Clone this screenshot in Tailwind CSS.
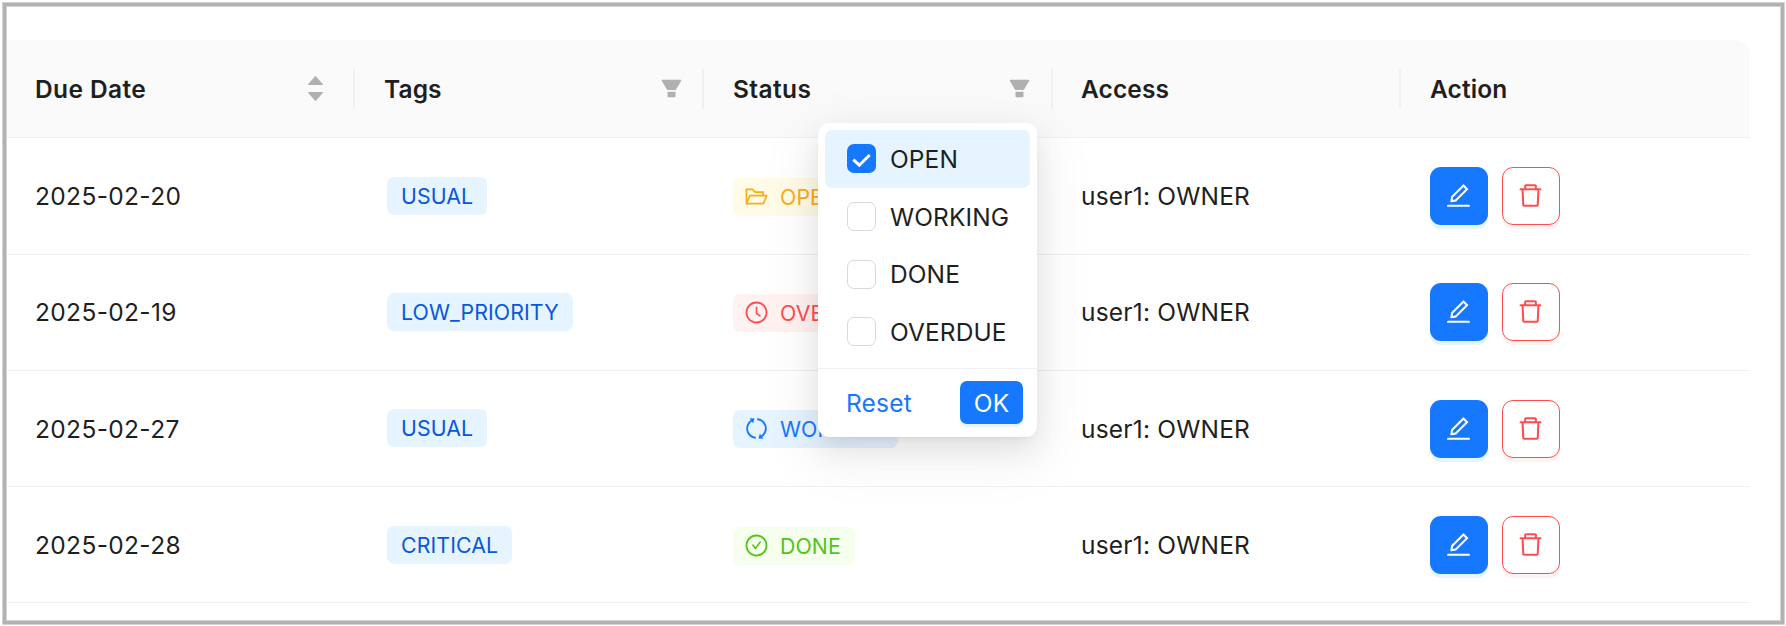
<!DOCTYPE html>
<html lang="en">
<head>
<meta charset="utf-8">
<title>Tasks</title>
<script src="https://cdn.jsdelivr.net/npm/@tailwindcss/browser@4"></script>
</head>
<body class="bg-white">
<svg class="hidden">
  <symbol id="filter" viewBox="0 0 1024 1024"><path d="M349 838c0 17.7 14.2 32 31.8 32h262.4c17.6 0 31.8-14.3 31.8-32V642H349v196zm531.1-684H143.9c-24.5 0-39.8 26.7-27.5 48l221.3 376h348.8l221.3-376c12.1-21.3-3.2-48-27.7-48z"/></symbol>
  <symbol id="edit" viewBox="0 0 1024 1024"><path d="M257.7 752c2 0 4-.2 6-.5L431.9 722c2-.4 3.9-1.3 5.3-2.8l423.9-423.9a9.96 9.96 0 000-14.1L694.9 114.9c-1.9-1.9-4.4-2.9-7.1-2.9s-5.2 1-7.1 2.9L256.8 538.8c-1.5 1.5-2.4 3.3-2.8 5.3l-29.5 168.2a33.5 33.5 0 009.4 29.8c6.6 6.4 14.9 9.9 23.8 9.9zm67.4-174.4L687.8 215l73.3 73.3-362.7 362.6-88.9 15.7 15.6-89zM880 836H144c-17.7 0-32 14.3-32 32v36c0 4.4 3.6 8 8 8h784c4.4 0 8-3.6 8-8v-36c0-17.7-14.3-32-32-32z"/></symbol>
  <symbol id="trash" viewBox="0 0 1024 1024"><path d="M360 184h-8c4.4 0 8-3.6 8-8v8h304v-8c0 4.4 3.6 8 8 8h-8v72h72v-80c0-35.3-28.7-64-64-64H352c-35.3 0-64 28.7-64 64v80h72v-72zm504 72H160c-17.7 0-32 14.3-32 32v32c0 4.4 3.6 8 8 8h60.4l24.7 523c1.6 34.1 29.8 61 63.9 61h454c34.2 0 62.3-26.8 63.9-61l24.7-523H888c4.4 0 8-3.6 8-8v-32c0-17.7-14.3-32-32-32zM731.3 840H292.7l-24.2-512h487l-24.2 512z"/></symbol>
  <symbol id="folder" viewBox="0 0 1024 1024"><path d="M928 444H820V330.4c0-17.7-14.3-32-32-32H473L355.7 186.2a8.15 8.15 0 00-5.5-2.2H96c-17.7 0-32 14.3-32 32v592c0 17.7 14.3 32 32 32h698c13 0 24.8-7.9 29.7-20l134-332c1.5-3.8 2.3-7.9 2.3-12 0-17.7-14.3-32-32-32zM136 256h188.5l119.6 114.4H748V444H238c-13 0-24.8 7.9-29.7 20L136 643.2V256zm635.3 512H159l103.3-256h612.4L771.3 768z"/></symbol>
  <symbol id="clock" viewBox="0 0 1024 1024"><path d="M512 64C264.6 64 64 264.6 64 512s200.6 448 448 448 448-200.6 448-448S759.4 64 512 64zm0 820c-205.4 0-372-166.6-372-372s166.6-372 372-372 372 166.6 372 372-166.6 372-372 372z"/><path d="M686.7 638.6L544.1 535.5V288c0-4.4-3.6-8-8-8H488c-4.4 0-8 3.6-8 8v275.4c0 2.6 1.2 5 3.3 6.5l165.4 120.6c3.6 2.6 8.6 1.8 11.2-1.7l28.6-39c2.6-3.7 1.8-8.7-1.8-11.2z"/></symbol>
  <symbol id="done" viewBox="0 0 1024 1024"><path d="M699 353h-46.9c-10.2 0-19.9 4.9-25.9 13.3L469 584.3l-71.2-98.8c-6-8.3-15.6-13.3-25.9-13.3H325c-6.5 0-10.3 7.4-6.5 12.7l124.6 172.8a31.8 31.8 0 0051.7 0l210.6-292c3.9-5.3.1-12.7-6.4-12.7z"/><path d="M512 64C264.6 64 64 264.6 64 512s200.6 448 448 448 448-200.6 448-448S759.4 64 512 64zm0 820c-205.4 0-372-166.6-372-372s166.6-372 372-372 372 166.6 372 372-166.6 372-372 372z"/></symbol>
  <symbol id="sync" viewBox="0 0 1024 1024"><path transform="rotate(-86 512 512)" d="M168 504.2c1-43.7 10-86.1 26.9-126 17.3-41 42.1-77.7 73.7-109.4S337 212.3 378 195c42.4-17.9 87.4-27 133.9-27s91.5 9.1 133.8 27A341.5 341.5 0 01755 268.8c9.9 9.9 19.2 20.4 27.8 31.4l-60.2 47a8 8 0 003 14.1l175.7 43c5 1.2 9.9-2.6 9.9-7.7l.8-180.9c0-6.7-7.7-10.5-12.9-6.3l-56.4 44.1C765.8 155.1 646.2 92 511.8 92 282.7 92 96.3 275.6 92 503.8a8 8 0 008 8.2h60c4.4 0 7.9-3.5 8-7.8zm756 7.8h-60c-4.4 0-7.9 3.5-8 7.8-1 43.7-10 86.1-26.9 126-17.3 41-42.1 77.8-73.7 109.4A342.45 342.45 0 01512.1 856a342.24 342.24 0 01-243.2-100.8c-9.9-9.9-19.2-20.4-27.8-31.4l60.2-47a8 8 0 00-3-14.1l-175.7-43c-5-1.2-9.9 2.6-9.9 7.7l-.7 181c0 6.7 7.7 10.5 12.9 6.3l56.4-44.1C258.2 868.9 377.8 932 512.2 932c229.2 0 415.5-183.7 419.8-411.8a8 8 0 00-8-8.2z"/></symbol>
</svg>
<div class="w-[1786px] h-[626px] overflow-hidden pt-[2px] pl-[2px] font-['Inter','Liberation_Sans',sans-serif] text-[24.5px] tracking-[0.1px] text-[#1f1f1f] whitespace-nowrap">
<div class="relative w-[1783px] h-[623px] border border-[#d4d4d4]">
<div class="h-full border-[3px] border-[#b2b2b2]">
<div class="h-full border border-[#d4d4d4] pt-[33px]">
  <div class="w-[1743px]">
    <div class="h-[98px] grid grid-cols-[348px_349px_349px_348px_349px] items-center bg-[#fafafa] border-b border-[#f0f0f0] rounded-tr-[14px] font-semibold text-[24.5px]">
      <div class="h-10 pl-[28px] pr-[30px] flex items-center justify-between border-r-2 border-[#f0f0f0]">
        <span class="pt-px tracking-[0.4px]">Due Date</span>
        <span class="flex flex-col gap-[7px] w-[15px]"><svg class="block w-[15px] h-[9px] fill-[#b0b0b0]" viewBox="160 300 704 424" preserveAspectRatio="none"><path d="M858.9 689L530.5 308.2c-9.4-10.9-27.5-10.9-37 0L165.1 689c-12.2 14.2-1.2 35 18.5 35h656.8c19.7 0 30.7-20.8 18.5-35z"/></svg><svg class="block w-[15px] h-[9px] fill-[#b0b0b0] rotate-180" viewBox="160 300 704 424" preserveAspectRatio="none"><path d="M858.9 689L530.5 308.2c-9.4-10.9-27.5-10.9-37 0L165.1 689c-12.2 14.2-1.2 35 18.5 35h656.8c19.7 0 30.7-20.8 18.5-35z"/></svg></span>
      </div>
      <div class="h-10 pl-[29px] pr-[18px] flex items-center justify-between border-r-2 border-[#f0f0f0]"><span class="pt-px">Tags</span><svg class="size-[25px] fill-[#b0b0b0]"><use href="#filter"/></svg></div>
      <div class="h-10 pl-[29px] pr-[19px] flex items-center justify-between border-r-2 border-[#f0f0f0]"><span class="pt-px tracking-[0.4px]">Status</span><svg class="size-[25px] fill-[#b0b0b0]"><use href="#filter"/></svg></div>
      <div class="h-10 pl-[28px] flex items-center border-r-2 border-[#f0f0f0]"><span class="pt-px">Access</span></div>
      <div class="h-10 pl-[29px] flex items-center"><span class="pt-px">Action</span></div>
    </div>
    <div id="rows"></div>
  </div>
</div></div>

<div class="absolute left-[815px] top-[120px] w-[219px] h-[314px] bg-white rounded-[11px] flex flex-col shadow-[0_11px_29px_0_rgba(0,0,0,0.08),0_5px_11px_-7px_rgba(0,0,0,0.12),0_16px_51px_14px_rgba(0,0,0,0.05)]">
  <div class="h-[245px] px-[7px] pt-[7px] flex flex-col">
    <div class="h-[58px] shrink-0 pl-[22px] pb-px flex items-center gap-[14px] bg-[#e6f4ff] rounded-[7px]"><span class="size-[29px] rounded-[7px] bg-[#1677ff] flex items-center justify-center"><svg class="mt-[3px] w-[19px] h-[15px]" viewBox="0 0 19 15" fill="none" stroke="#fff" stroke-width="3"><path d="M1.3 6.7 7.3 12.2 17.7 2"/></svg></span><span class="pt-[2px]">OPEN</span></div>
    <div class="h-[58px] shrink-0 pl-[22px] pb-px flex items-center gap-[14px]"><span class="size-[29px] rounded-[7px] border border-[#d9d9d9]"></span><span class="pt-[2px]">WORKING</span></div>
    <div class="h-[57px] shrink-0 pl-[22px] flex items-center gap-[14px]"><span class="size-[29px] rounded-[7px] border border-[#d9d9d9]"></span><span>DONE</span></div>
    <div class="h-[58px] shrink-0 pl-[22px] pb-px flex items-center gap-[14px]"><span class="size-[29px] rounded-[7px] border border-[#d9d9d9]"></span><span class="pt-[2px]">OVERDUE</span></div>
  </div>
  <div class="h-[69px] border-t border-[#f0f0f0] pl-[28px] pr-[14px] pb-px flex items-center justify-between">
    <span class="text-[#1677ff] pt-px tracking-[0.2px]">Reset</span>
    <span class="w-[63px] h-[43px] rounded-[7px] bg-[#1677ff] text-white flex items-center justify-center pt-px shadow-[0_3px_0_rgba(5,145,255,0.1)]">OK</span>
  </div>
</div>
</div>
</div>
<script>
const rows = [
  ['2025-02-20', 'USUAL', 'OPEN', 'folder', 'bg-[#fffbe6] text-[#faad14]', 'h-[117px]'],
  ['2025-02-19', 'LOW_PRIORITY', 'OVERDUE', 'clock', 'bg-[#fff2f0] text-[#ff4d4f]', 'h-[116px] pb-px'],
  ['2025-02-27', 'USUAL', 'WORKING', 'sync', 'bg-[#e6f4ff] text-[#1677ff]', 'h-[116px] pb-px'],
  ['2025-02-28', 'CRITICAL', 'DONE', 'done', 'bg-[#f6ffed] text-[#52c41a]', 'h-[116px] pt-px'],
];
document.getElementById('rows').innerHTML = rows.map(([date, tag, status, icon, color, h], i) => `
  <div class="${h} grid grid-cols-[348px_349px_349px_348px_349px] items-center border-b border-[#f0f0f0]">
    <div class="pl-[28px] ${i === 2 ? 'pt-[2px]' : ''} tracking-[0.35px]"><span>${date}</span></div>
    <div class="pl-[32px] flex"><span class="h-[38px] pl-[14px] pr-[14px] pt-px rounded-[7px] bg-[#e6f4ff] text-[#0958d9] text-[21.3px] flex items-center">${tag}</span></div>
    <div class="pl-[29px] pt-[2px] flex"><span class="h-[38px] pl-[11px] pr-[14px] rounded-[7px] text-[21.3px] flex items-center gap-[11px] ${color}"><svg class="size-[25px] mb-px fill-current"><use href="#${icon}"/></svg><span class="pt-[2px]">${status}</span></span></div>
    <div class="pl-[28px] ${i === 2 ? 'pt-[2px]' : ''} tracking-[0.2px]"><span>user1: OWNER</span></div>
    <div class="pl-[29px] ${i === 2 ? 'pt-[2px]' : ''} flex gap-[14px]">
      <span class="size-[58px] rounded-[11px] bg-[#1677ff] text-white flex items-center justify-center pr-px pb-px shadow-[0_4px_0_rgba(5,145,255,0.1)]"><svg class="size-[29px] fill-current"><use href="#edit"/></svg></span>
      <span class="size-[58px] rounded-[11px] border border-[#ff4d4f] bg-white text-[#ff4d4f] flex items-center justify-center pr-px pb-px shadow-[0_4px_0_rgba(255,38,5,0.06)]"><svg class="size-[29px] fill-current"><use href="#trash"/></svg></span>
    </div>
  </div>`).join('');
</script>
</body>
</html>
